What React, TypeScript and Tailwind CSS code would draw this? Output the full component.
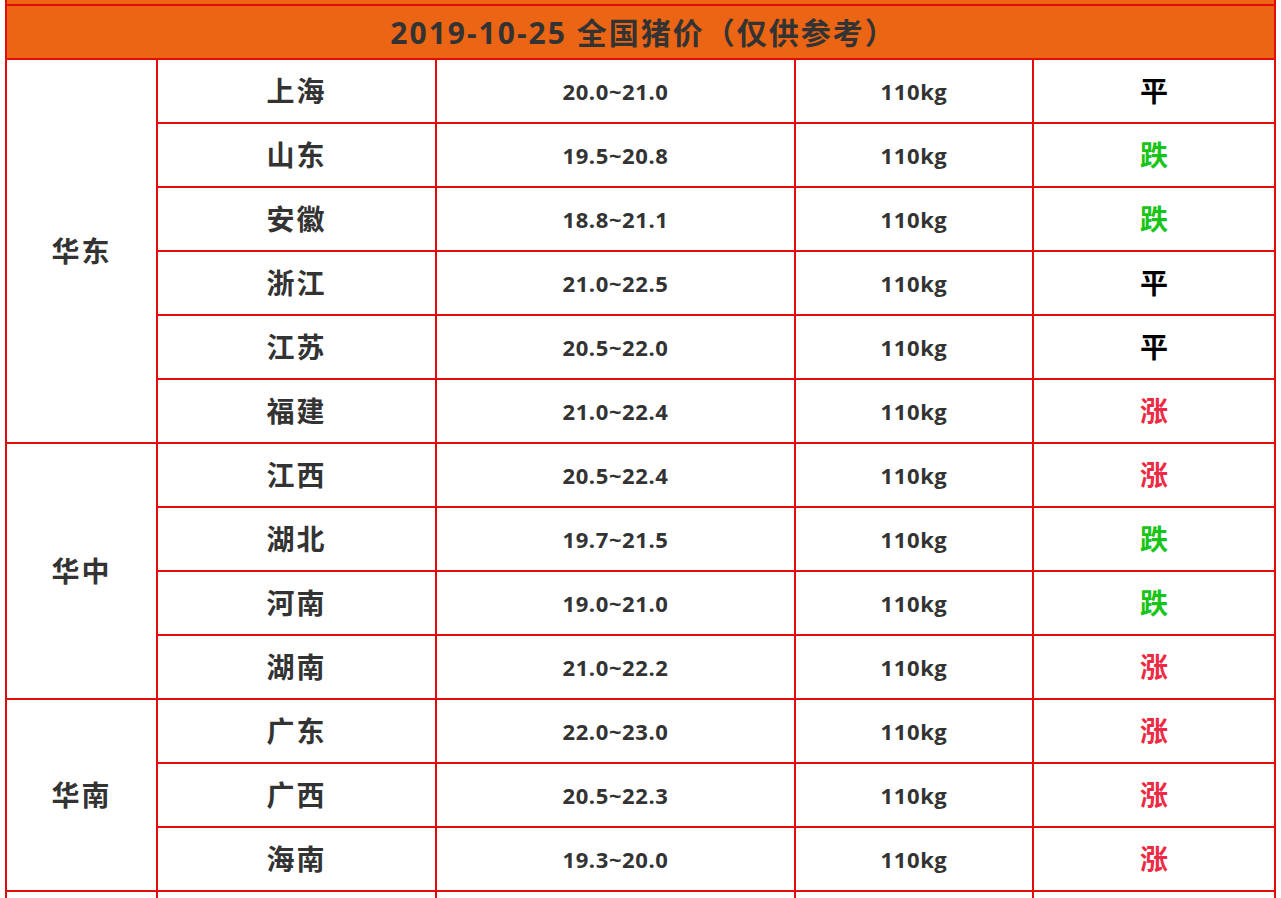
type Trend = "平" | "跌" | "涨";

interface PriceRow {
  province: string;
  range:    string;
  weight:   string;
  trend:    Trend;
}

interface RegionGroup {
  region: string;
  rows:   PriceRow[];
}

const DATE_TITLE = "2019-10-25 全国猪价（仅供参考）";

const REGIONS: RegionGroup[] = [
  {
    region: "华东",
    rows: [
      { province: "上海", range: "20.0~21.0", weight: "110kg", trend: "平" },
      { province: "山东", range: "19.5~20.8", weight: "110kg", trend: "跌" },
      { province: "安徽", range: "18.8~21.1", weight: "110kg", trend: "跌" },
      { province: "浙江", range: "21.0~22.5", weight: "110kg", trend: "平" },
      { province: "江苏", range: "20.5~22.0", weight: "110kg", trend: "平" },
      { province: "福建", range: "21.0~22.4", weight: "110kg", trend: "涨" },
    ],
  },
  {
    region: "华中",
    rows: [
      { province: "江西", range: "20.5~22.4", weight: "110kg", trend: "涨" },
      { province: "湖北", range: "19.7~21.5", weight: "110kg", trend: "跌" },
      { province: "河南", range: "19.0~21.0", weight: "110kg", trend: "跌" },
      { province: "湖南", range: "21.0~22.2", weight: "110kg", trend: "涨" },
    ],
  },
  {
    region: "华南",
    rows: [
      { province: "广东", range: "22.0~23.0", weight: "110kg", trend: "涨" },
      { province: "广西", range: "20.5~22.3", weight: "110kg", trend: "涨" },
      { province: "海南", range: "19.3~20.0", weight: "110kg", trend: "涨" },
    ],
  },
];

const trendClass: Record<Trend, string> = {
  "平": "text-black",
  "跌": "text-[#18c418]",
  "涨": "text-[#ee2b44]",
};

const FONT = "font-['Open_Sans','Noto_Sans_CJK_SC',sans-serif]";
const cellBorder = "border-r-2 border-b-2 border-[#e40b0b] p-0 align-middle";

function RowCells({ row }: { row: PriceRow }) {
  return (
    <>
      <td className={cellBorder}>
        <div className="flex h-[62px] items-center justify-center text-[28px] font-bold tracking-[2px] text-[#333]">
          {row.province}
        </div>
      </td>
      <td className={cellBorder}>
        <div className="flex h-[62px] items-center justify-center text-[22px] font-bold tracking-[0.6px] text-[#333]">
          {row.range}
        </div>
      </td>
      <td className={cellBorder}>
        <div className="flex h-[62px] items-center justify-center text-[22px] font-bold tracking-[0.6px] text-[#333]">
          {row.weight}
        </div>
      </td>
      <td className={cellBorder}>
        <div className={`flex h-[62px] items-center justify-center text-[28px] font-bold ${trendClass[row.trend]}`}>
          {row.trend}
        </div>
      </td>
    </>
  );
}

export default function App() {
  return (
    <div className={`min-h-screen bg-white pl-[5px] ${FONT}`}>
      <table className="w-[1271px] table-fixed border-separate border-spacing-0">
        <colgroup>
          <col className="w-[153px]" />
          <col className="w-[279px]" />
          <col className="w-[359px]" />
          <col className="w-[238px]" />
          <col className="w-[242px]" />
        </colgroup>
        <tbody>
          {/* tail end of the row above, scrolled off the top */}
          <tr>
            <td colSpan={5} className="h-[4px] border-x-2 border-[#e40b0b] bg-[#ec6514] p-0" />
          </tr>
          <tr>
            <td colSpan={5} className="border-2 border-[#e40b0b] bg-[#ec6514] p-0">
              <div className="flex h-[52px] items-center justify-center pl-[6px] text-[30px] font-bold tracking-[2px] text-[#333]">
                {DATE_TITLE}
              </div>
            </td>
          </tr>
          {REGIONS.map((group) =>
            group.rows.map((row, i) => (
              <tr key={`${group.region}-${row.province}`}>
                {i === 0 && (
                  <td
                    rowSpan={group.rows.length}
                    className={`${cellBorder} border-l-2 text-center text-[28px] font-bold tracking-[2px] text-[#333]`}
                  >
                    {group.region}
                  </td>
                )}
                <RowCells row={row} />
              </tr>
            ))
          )}
          {/* next region begins just below the fold */}
          <tr>
            <td className={`${cellBorder} border-l-2`}>
              <div className="h-[62px]" />
            </td>
            <td className={cellBorder} />
            <td className={cellBorder} />
            <td className={cellBorder} />
            <td className={cellBorder} />
          </tr>
        </tbody>
      </table>
    </div>
  );
}
